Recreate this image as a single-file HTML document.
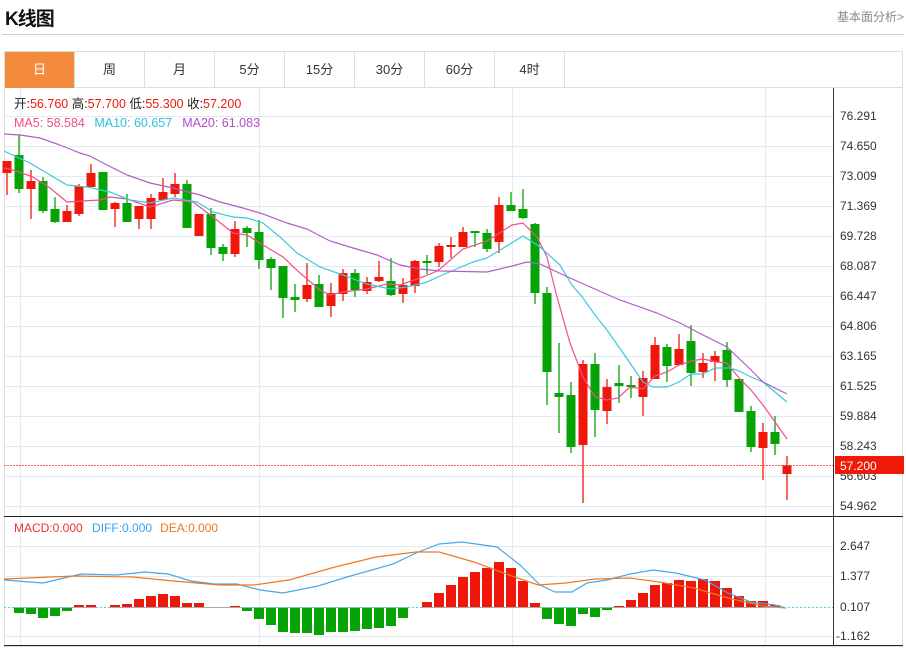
<!DOCTYPE html>
<html><head><meta charset="utf-8">
<style>
*{margin:0;padding:0;box-sizing:border-box}
body{width:906px;height:648px;background:#fff;font-family:"Liberation Sans","Noto Sans CJK SC",sans-serif;position:relative;overflow:hidden}
.title{position:absolute;left:5px;top:4px;font-size:19px;font-weight:bold;color:#111;letter-spacing:-1px}
.more{position:absolute;right:2px;top:8px;font-size:12px;color:#888}
.hr{position:absolute;left:2px;right:2px;top:34px;height:1px;background:#ccc}
.tabs{position:absolute;left:4px;top:51px;width:899px;height:37px;border:1px solid #ddd;border-bottom:none}
.tab{position:absolute;top:0;height:36px;width:70px;border-right:1px solid #ddd;text-align:center;line-height:36px;font-size:13px;color:#333}
.tab.on{background:#f48a3c;color:#fff}
.frame{position:absolute;left:4px;top:87px;width:899px;height:560px;border:1px solid #ddd}
svg{position:absolute;left:0;top:0}
</style></head><body>
<div class="title">K线图</div>
<div class="more">基本面分析&gt;</div>
<div class="hr"></div>
<div class="frame"></div>
<div class="tabs">
<div class="tab on" style="left:0">日</div>
<div class="tab" style="left:70px">周</div>
<div class="tab" style="left:140px">月</div>
<div class="tab" style="left:210px">5分</div>
<div class="tab" style="left:280px">15分</div>
<div class="tab" style="left:350px">30分</div>
<div class="tab" style="left:420px">60分</div>
<div class="tab" style="left:490px">4时</div>
</div>
<svg id="s" width="906" height="648" xmlns="http://www.w3.org/2000/svg" font-family="Liberation Sans, Noto Sans CJK SC, sans-serif">
<g id="grid" stroke="#e2e9f0" stroke-width="1"></g>
<g id="bars"></g>
<g id="cd"></g>
<g id="ln" fill="none" stroke-width="1.2"></g>
<line x1="4" y1="465.5" x2="833" y2="465.5" stroke="#f06060" stroke-dasharray="2,1" stroke-width="1"/>
<line x1="4" y1="607.5" x2="833" y2="607.5" stroke="#5bc8e0" stroke-dasharray="2,2" stroke-width="1"/>
<line x1="833.5" y1="88" x2="833.5" y2="646" stroke="#333"/>
<line x1="4" y1="516.5" x2="903" y2="516.5" stroke="#222"/>
<line x1="4" y1="645.5" x2="903" y2="645.5" stroke="#222"/>
<g font-size="12" fill="#333" id="ax">
<text x="840" y="120">76.291</text><text x="840" y="150">74.650</text><text x="840" y="180">73.009</text>
<text x="840" y="210">71.369</text><text x="840" y="240">69.728</text><text x="840" y="270">68.087</text>
<text x="840" y="300">66.447</text><text x="840" y="330">64.806</text><text x="840" y="360">63.165</text>
<text x="840" y="390">61.525</text><text x="840" y="420">59.884</text><text x="840" y="450">58.243</text>
<text x="840" y="480">56.603</text><text x="840" y="510">54.962</text>
<text x="840" y="550">2.647</text><text x="840" y="580">1.377</text><text x="840" y="611">0.107</text><text x="836" y="640">-1.162</text>
</g>
<rect x="835" y="456" width="69" height="18" fill="#f01a0a"/>
<text x="840" y="470" font-size="12" fill="#fff">57.200</text>
<text x="14" y="108" font-size="12.5" fill="#222">开:<tspan fill="#f01a0a">56.760</tspan>  高:<tspan fill="#f01a0a">57.700</tspan>  低:<tspan fill="#f01a0a">55.300</tspan>  收:<tspan fill="#f01a0a">57.200</tspan></text>
<text x="14" y="127" font-size="12.5" fill="#f0508a">MA5: 58.584 <tspan fill="#30c0dc" dx="6">MA10: 60.657</tspan><tspan fill="#b050c8" dx="10">MA20: 61.083</tspan></text>
<text x="14" y="532" font-size="12" fill="#f03030">MACD:0.000 <tspan fill="#3aa0f0" dx="6">DIFF:0.000</tspan><tspan fill="#f07820" dx="8">DEA:0.000</tspan></text>
</svg>
<script>
var NS="http://www.w3.org/2000/svg";
function el(p,t,a){var e=document.createElementNS(NS,t);for(var k in a)e.setAttribute(k,a[k]);document.getElementById(p).appendChild(e);return e;}
[116,146,176,206,236,266,296,326,356,386,416,446,476,506,546,576,636].forEach(function(y){el("grid","line",{x1:4,x2:833,y1:y+.5,y2:y+.5});});
[20,259,512,765].forEach(function(x){el("grid","line",{x1:x+.5,x2:x+.5,y1:88,y2:646});});
var R="#f0160a",G="#06a306";
var c=[["r",161,173,161,195],["g",155,189,135,193],["r",181,189,170,219],["g",181,211,177,213],["g",209,222,197,223],["r",211,222,205,222],["r",186,214,184,216],["r",173,187,164,187],["g",172,210,172,210],["r",203,209,202,227],["g",203,222,194,222],["r",206,219,206,229],["r",198,219,194,229],["r",192,200,178,200],["r",184,194,173,197],["g",184,228,180,228],["r",214,236,214,236],["g",214,248,208,255],["g",247,254,244,261],["r",229,254,221,257],["g",228,233,226,247],["g",232,260,220,269],["g",259,268,257,290],["g",266,298,266,318],["g",297,300,284,312],["r",285,299,263,302],["g",284,307,275,307],["r",293,306,283,317],["r",273,294,269,301],["g",273,290,269,297],["r",282,291,277,294],["r",277,281,261,282],["g",281,295,258,296],["r",285,294,278,303],["r",261,286,260,293],["g",261,263,255,274],["r",246,262,243,267],["r",245,247,237,258],["r",232,247,227,247],["g",231,233,231,247],["g",233,249,229,252],["r",205,242,197,253],["g",205,211,192,211],["g",209,218,189,219],["g",224,293,223,304],["g",293,372,287,405],["g",393,397,343,433],["g",395,447,382,453],["r",364,445,360,503],["g",364,410,353,437],["r",387,411,379,424],["g",383,386,365,403],["g",385,387,376,398],["r",378,397,371,416],["r",345,379,337,379],["g",347,366,344,382],["r",349,365,334,365],["g",341,373,325,386],["r",363,372,353,378],["r",356,362,351,381],["g",350,380,342,387],["g",379,412,379,412],["g",411,447,406,452],["r",432,448,423,480],["g",432,444,416,455],["r",465,474,456,500]];
c.forEach(function(d,i){var x=7+12*i,col=d[0]=="r"?R:G;
el("cd","line",{x1:x,x2:x,y1:d[3],y2:d[4],stroke:col,"stroke-width":1.3});
el("cd","rect",{x:x-4.5,y:d[1],width:9,height:Math.max(2,d[2]-d[1]),fill:col});});
var b=[null,613,614,618,616,611,605,605,null,605,604,599,596,594,596,603,603,607,607,606,611,619,625,632,633,633,635,632,632,631,629,628,626,618,null,602,593,585,577,572,568,562,568,581,603,619,624,626,614,617,610,606,600,593,585,583,580,581,579,581,588,596,601,601,605];
b.forEach(function(y,i){if(y==null)return;var x=7+12*i;var up=y<607.5;el("bars","rect",{x:x-5,y:up?y:607.5,width:10,height:Math.abs(y-607.5)||1,fill:up?R:G});});
function pl(pts,col){el("ln","polyline",{points:pts.map(function(p){return p.join(",")}).join(" "),stroke:col});}
pl([[4,168],[13,170],[33,177],[50,188],[67,202],[83,201],[100,200],[110,197],[127,199],[150,207],[173,200],[193,202],[213,217],[233,233],[247,235],[263,245],[283,257],[300,273],[320,290],[330,295],[343,292],[367,289],[387,284],[400,285],[417,279],[433,273],[440,269],[463,249],[487,241],[512,225],[523,223],[537,237],[547,257],[557,297],[570,343],[583,377],[595,397],[607,400],[618,398],[630,387],[643,389],[655,376],[667,372],[679,365],[691,361],[703,359],[717,362],[727,363],[739,378],[751,390],[763,405],[775,422],[787,439]],"#f0508a");
pl([[4,151],[30,163],[50,175],[67,185],[87,187],[110,192],[130,200],[150,203],[173,198],[197,202],[213,212],[233,217],[247,218],[263,223],[280,237],[297,253],[320,267],[343,275],[367,284],[390,289],[407,287],[427,282],[440,276],[473,262],[487,258],[523,236],[540,247],[560,265],[572,285],[583,298],[595,315],[607,330],[630,363],[643,382],[653,387],[667,387],[679,382],[691,374],[703,374],[715,368],[730,368],[739,371],[751,377],[763,382],[775,392],[787,402]],"#3cc8e0");
pl([[4,134],[20,135],[40,138],[60,145],[80,153],[90,156],[103,163],[127,175],[150,183],[173,188],[200,195],[220,202],[243,208],[263,214],[287,223],[307,229],[330,241],[353,248],[377,255],[400,265],[420,269],[440,271],[487,272],[512,266],[527,262],[540,264],[557,272],[570,278],[597,290],[620,300],[657,313],[680,323],[703,335],[727,347],[751,370],[763,382],[787,394]],"#b35cc8");
pl([[4,580],[43,583],[81,574],[116,575],[145,572],[168,574],[191,581],[214,584],[237,584],[260,590],[283,593],[318,586],[347,577],[393,564],[416,553],[439,544],[462,542],[497,547],[520,565],[540,585],[555,592],[572,592],[587,583],[607,580],[630,574],[653,570],[676,573],[705,580],[728,593],[751,602],[775,605],[786,608]],"#4aa8e8");
pl([[4,579],[75,576],[133,577],[173,581],[220,585],[254,585],[289,580],[335,567],[376,557],[416,552],[439,552],[474,562],[509,575],[538,585],[566,583],[595,579],[630,578],[659,582],[694,588],[728,598],[763,606],[786,608]],"#f07820");
</script>
</body></html>
